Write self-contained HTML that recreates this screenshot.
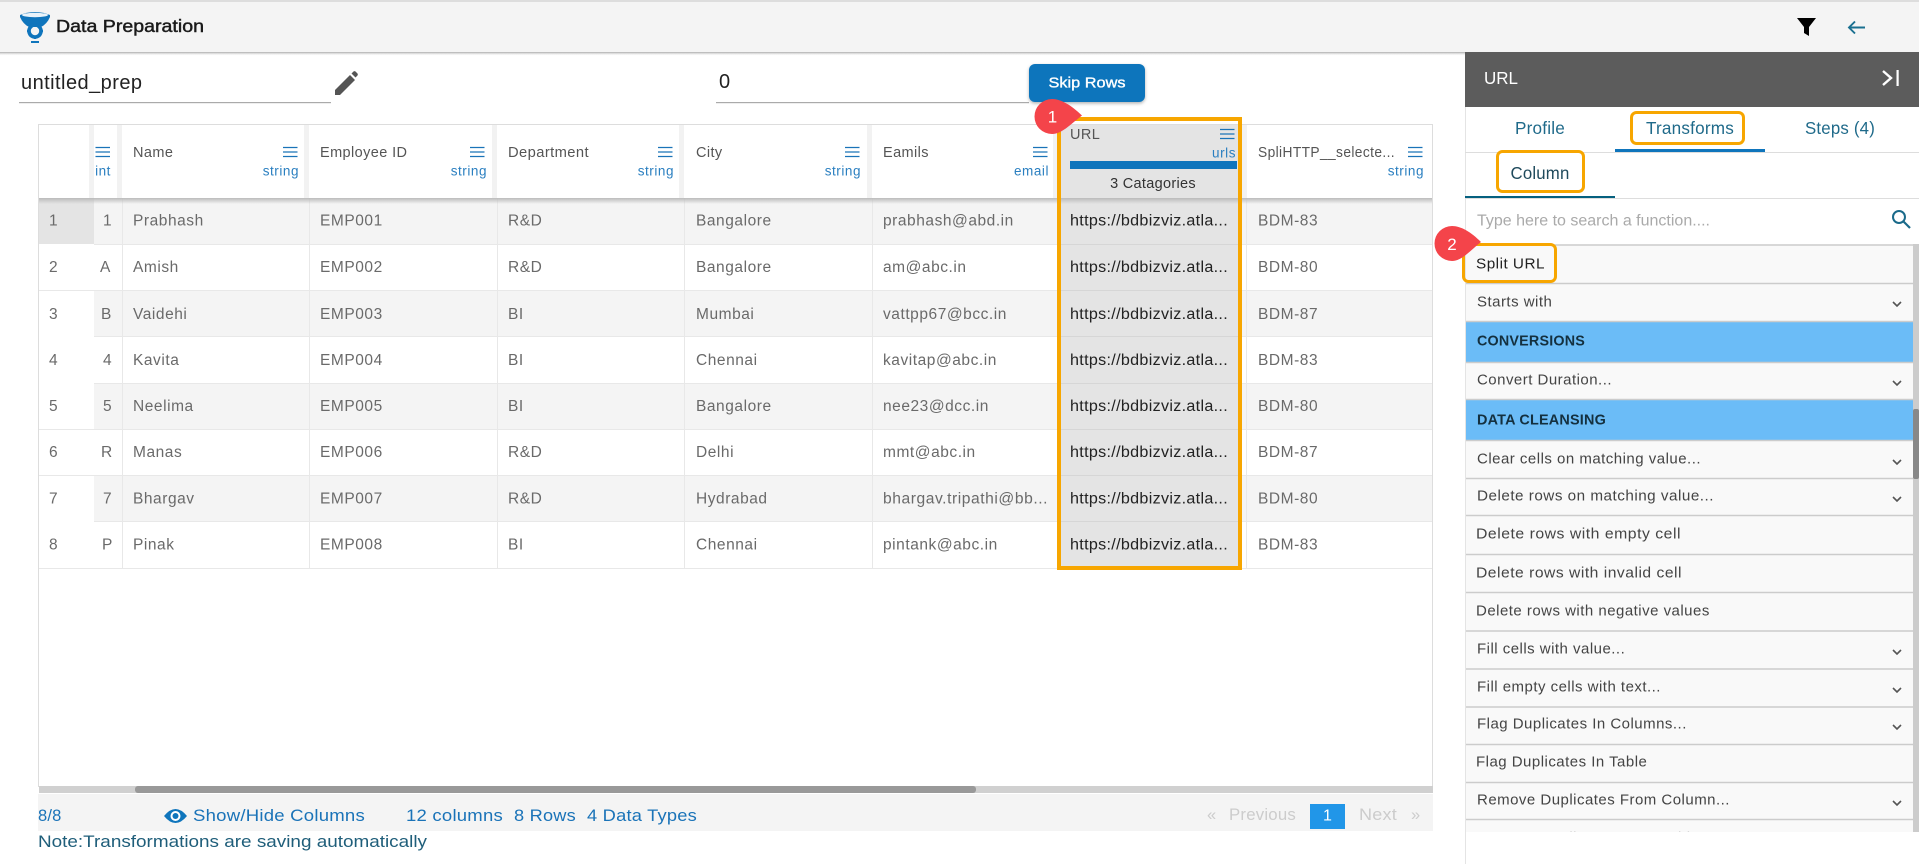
<!DOCTYPE html>
<html><head><meta charset="utf-8"><title>Data Preparation</title>
<style>
html,body{margin:0;padding:0;background:#fff;width:1919px;height:864px;overflow:hidden}
svg{display:block}
text{font-family:"Liberation Sans",sans-serif;dominant-baseline:central}
.c{font-size:15.5px;letter-spacing:.55px;fill:#6a6a6a;transform:translateY(1px)}
.u{font-size:15.5px;letter-spacing:.3px;fill:#222;transform:translateY(1px)}
.h{font-size:14.5px;letter-spacing:.4px;fill:#555;transform:translateY(1px)}
.t{font-size:13.5px;letter-spacing:.55px;fill:#2a7fc0;text-anchor:end;transform:translateY(1px)}
.i{font-size:15px;letter-spacing:.48px;fill:#444}
.b{font-size:15px;font-weight:bold;letter-spacing:.2px;fill:#14303f}
.f{font-size:16.5px;letter-spacing:.2px;fill:#1a73b8}
.p{font-size:16.5px;letter-spacing:.2px;fill:#ccc}
.tab{font-size:17.5px;letter-spacing:.2px;fill:#1f6a8a;text-anchor:middle}
.m{stroke:#1a73b8;stroke-width:1.3;fill:none}
.ch{stroke:#555;stroke-width:1.6;fill:none}
.l{stroke:#ccc;stroke-width:1.5}
.rl{stroke:#e8e8e8;stroke-width:1}
.o{fill:none;stroke:#f7a600}
</style></head><body>
<svg width="1919" height="864" viewBox="0 0 1919 864" xmlns="http://www.w3.org/2000/svg">
<defs>
<linearGradient id="sh" x1="0" y1="0" x2="0" y2="1"><stop offset="0" stop-color="#aaa"/><stop offset="1" stop-color="#fff" stop-opacity="0"/></linearGradient>
<linearGradient id="sh2" x1="0" y1="0" x2="0" y2="1"><stop offset="0" stop-color="#bbb"/><stop offset="1" stop-color="#bbb" stop-opacity="0"/></linearGradient>
<filter id="bs" x="-10%" y="-10%" width="120%" height="130%"><feDropShadow dx="0" dy="1.5" stdDeviation="1.5" flood-color="#000" flood-opacity=".3"/></filter>
</defs>

<!-- top bar -->
<rect width="1919" height="52" fill="#f4f4f4"/>
<rect width="1919" height="2" fill="#ddd"/>
<rect y="52" width="1919" height="4" fill="url(#sh)"/>
<!-- logo -->
<path d="M20 15 Q35 9 50 15 L50 17 Q47 24 41 27 L29 27 Q23 24 20 17Z" fill="#0f75bc"/>
<ellipse cx="35" cy="15" rx="13" ry="2.2" fill="#e9f3fa"/>
<circle cx="35" cy="31" r="6" fill="none" stroke="#0f75bc" stroke-width="3.6"/>
<path d="M35 23v3M35 36v3M27 31h3M40 31h3M29.5 25.5l2 2M38.5 34.5l2 2M40.5 25.5l-2 2M31.5 34.5l-2 2" stroke="#0f75bc" stroke-width="2.2"/>
<path d="M31 42h8" stroke="#0f75bc" stroke-width="2"/>
<text x="56" y="26" font-size="17.5" stroke="#1a1a1a" stroke-width=".45" textLength="148" lengthAdjust="spacingAndGlyphs" fill="#1a1a1a">Data Preparation</text>
<!-- top right icons -->
<path d="M1797 18H1816L1809 27V36L1804 33V27Z" fill="#000"/>
<path d="M1865 27.5H1849M1855 21.5L1849 27.5L1855 33.5" stroke="#1a7090" stroke-width="1.9" fill="none"/>

<!-- inputs -->
<text x="21" y="83" font-size="20" letter-spacing=".45" fill="#222">untitled_prep</text>
<rect x="19" y="102" width="312" height="1.2" fill="#aaa"/>
<path d="M335 95V90L350 75L355 80L340 95Z" fill="#555"/>
<path d="M351.5 73.5L353.5 71.5Q354.5 70.8 355.5 71.5L357.5 73.5Q358.2 74.5 357.5 75.5L355.5 77.5Z" fill="#555"/>
<text x="719" y="82" font-size="20" fill="#222">0</text>
<rect x="716" y="102" width="313" height="1.2" fill="#aaa"/>
<rect x="1029" y="64" width="116" height="38" rx="6" fill="#0f75bc" filter="url(#bs)"/>
<text x="1087" y="83" font-size="15" fill="#fff" stroke="#fff" stroke-width=".35" text-anchor="middle" textLength="77" lengthAdjust="spacingAndGlyphs">Skip Rows</text>

<!-- table frame -->
<rect x="38.5" y="124.5" width="1394" height="662" fill="#fff" stroke="#ddd"/>
<!-- header gutters -->
<rect x="89" y="125" width="5" height="73" fill="#f2f2f2"/>
<rect x="117" y="125" width="5" height="73" fill="#f2f2f2"/>
<rect x="304" y="125" width="5" height="73" fill="#f2f2f2"/>
<rect x="492" y="125" width="5" height="73" fill="#f2f2f2"/>
<rect x="679" y="125" width="5" height="73" fill="#f2f2f2"/>
<rect x="867" y="125" width="5" height="73" fill="#f2f2f2"/>
<rect x="1053" y="125" width="5" height="73" fill="#f2f2f2"/>
<rect x="1242" y="125" width="5" height="73" fill="#f2f2f2"/>

<!-- rows -->
<rect x="39" y="198" width="55" height="46" fill="#e4e4e4"/>
<rect x="94" y="198" width="1338" height="47" fill="#f4f4f4"/>
<rect x="94" y="291" width="1338" height="46" fill="#f4f4f4"/>
<rect x="94" y="383" width="1338" height="46" fill="#f4f4f4"/>
<rect x="94" y="476" width="1338" height="46" fill="#f4f4f4"/>
<rect x="1058" y="125" width="184" height="443" fill="#e4e4e4"/>
<path class="rl" d="M94 244.5H1432M39 290.5H1432M94 336.5H1432M94 383.5H1432M39 429.5H1432M39 475.5H1432M94 521.5H1432M39 568.5H1432"/>
<path d="M1058 244.5H1242M1058 290.5H1242M1058 336.5H1242M1058 383.5H1242M1058 429.5H1242M1058 475.5H1242M1058 521.5H1242" stroke="#d6d6d6"/>
<path class="rl" d="M122.5 198V568M309.5 198V568M497.5 198V568M684.5 198V568M872.5 198V568M1246.5 198V568"/>
<rect x="39" y="198" width="1393" height="6" fill="url(#sh2)"/>

<!-- header text -->
<g class="m">
<path d="M95.5 147.5h14.5M95.5 152h14.5M95.5 156.5h14.5"/>
<path d="M283 147.5h14.5M283 152h14.5M283 156.5h14.5"/>
<path d="M470 147.5h14.5M470 152h14.5M470 156.5h14.5"/>
<path d="M658 147.5h14.5M658 152h14.5M658 156.5h14.5"/>
<path d="M845 147.5h14.5M845 152h14.5M845 156.5h14.5"/>
<path d="M1033 147.5h14.5M1033 152h14.5M1033 156.5h14.5"/>
<path d="M1220 129.5h14.5M1220 134h14.5M1220 138.5h14.5"/>
<path d="M1408 147.5h14.5M1408 152h14.5M1408 156.5h14.5"/>
</g>
<text class="t" x="111" y="170">int</text>
<text class="h" x="133" y="152">Name</text><text class="t" x="299" y="170">string</text>
<text class="h" x="320" y="152">Employee ID</text><text class="t" x="487" y="170">string</text>
<text class="h" x="508" y="152" textLength="81" lengthAdjust="spacingAndGlyphs">Department</text><text class="t" x="674" y="170">string</text>
<text class="h" x="696" y="152">City</text><text class="t" x="861" y="170">string</text>
<text class="h" x="883" y="152">Eamils</text><text class="t" x="1049" y="170">email</text>
<text class="h" x="1070" y="134">URL</text><text class="t" x="1236" y="152">urls</text>
<rect x="1070" y="161" width="167" height="8" fill="#0f75bc"/>
<text x="1153" y="184" font-size="14.5" letter-spacing=".3" fill="#333" text-anchor="middle">3 Catagories</text>
<text class="h" x="1258" y="152" textLength="137" lengthAdjust="spacingAndGlyphs">SpliHTTP__selecte...</text><text class="t" x="1424" y="170">string</text>

<!-- cells -->
<g>
<text class="c" x="49" y="220">1</text><text class="c" x="103" y="220">1</text><text class="c" x="133" y="220">Prabhash</text><text class="c" x="320" y="220">EMP001</text><text class="c" x="508" y="220">R&amp;D</text><text class="c" x="696" y="220">Bangalore</text><text class="c" x="883" y="220">prabhash@abd.in</text><text class="c" x="1258" y="220">BDM-83</text>
<text class="c" x="49" y="266.5">2</text><text class="c" x="100" y="266.5">A</text><text class="c" x="133" y="266.5">Amish</text><text class="c" x="320" y="266.5">EMP002</text><text class="c" x="508" y="266.5">R&amp;D</text><text class="c" x="696" y="266.5">Bangalore</text><text class="c" x="883" y="266.5">am@abc.in</text><text class="c" x="1258" y="266.5">BDM-80</text>
<text class="c" x="49" y="313.5">3</text><text class="c" x="101" y="313.5">B</text><text class="c" x="133" y="313.5">Vaidehi</text><text class="c" x="320" y="313.5">EMP003</text><text class="c" x="508" y="313.5">BI</text><text class="c" x="696" y="313.5">Mumbai</text><text class="c" x="883" y="313.5">vattpp67@bcc.in</text><text class="c" x="1258" y="313.5">BDM-87</text>
<text class="c" x="49" y="359.5">4</text><text class="c" x="103" y="359.5">4</text><text class="c" x="133" y="359.5">Kavita</text><text class="c" x="320" y="359.5">EMP004</text><text class="c" x="508" y="359.5">BI</text><text class="c" x="696" y="359.5">Chennai</text><text class="c" x="883" y="359.5">kavitap@abc.in</text><text class="c" x="1258" y="359.5">BDM-83</text>
<text class="c" x="49" y="405.5">5</text><text class="c" x="103" y="405.5">5</text><text class="c" x="133" y="405.5">Neelima</text><text class="c" x="320" y="405.5">EMP005</text><text class="c" x="508" y="405.5">BI</text><text class="c" x="696" y="405.5">Bangalore</text><text class="c" x="883" y="405.5">nee23@dcc.in</text><text class="c" x="1258" y="405.5">BDM-80</text>
<text class="c" x="49" y="451.5">6</text><text class="c" x="101" y="451.5">R</text><text class="c" x="133" y="451.5">Manas</text><text class="c" x="320" y="451.5">EMP006</text><text class="c" x="508" y="451.5">R&amp;D</text><text class="c" x="696" y="451.5">Delhi</text><text class="c" x="883" y="451.5">mmt@abc.in</text><text class="c" x="1258" y="451.5">BDM-87</text>
<text class="c" x="49" y="498">7</text><text class="c" x="103" y="498">7</text><text class="c" x="133" y="498">Bhargav</text><text class="c" x="320" y="498">EMP007</text><text class="c" x="508" y="498">R&amp;D</text><text class="c" x="696" y="498">Hydrabad</text><text class="c" x="883" y="498" textLength="165" lengthAdjust="spacingAndGlyphs">bhargav.tripathi@bb...</text><text class="c" x="1258" y="498">BDM-80</text>
<text class="c" x="49" y="544">8</text><text class="c" x="102" y="544">P</text><text class="c" x="133" y="544">Pinak</text><text class="c" x="320" y="544">EMP008</text><text class="c" x="508" y="544">BI</text><text class="c" x="696" y="544">Chennai</text><text class="c" x="883" y="544">pintank@abc.in</text><text class="c" x="1258" y="544">BDM-83</text>
</g>
<g>
<text class="u" x="1070" y="220" textLength="158" lengthAdjust="spacingAndGlyphs">https://bdbizviz.atla...</text>
<text class="u" x="1070" y="266.5" textLength="158" lengthAdjust="spacingAndGlyphs">https://bdbizviz.atla...</text>
<text class="u" x="1070" y="313.5" textLength="158" lengthAdjust="spacingAndGlyphs">https://bdbizviz.atla...</text>
<text class="u" x="1070" y="359.5" textLength="158" lengthAdjust="spacingAndGlyphs">https://bdbizviz.atla...</text>
<text class="u" x="1070" y="405.5" textLength="158" lengthAdjust="spacingAndGlyphs">https://bdbizviz.atla...</text>
<text class="u" x="1070" y="451.5" textLength="158" lengthAdjust="spacingAndGlyphs">https://bdbizviz.atla...</text>
<text class="u" x="1070" y="498" textLength="158" lengthAdjust="spacingAndGlyphs">https://bdbizviz.atla...</text>
<text class="u" x="1070" y="544" textLength="158" lengthAdjust="spacingAndGlyphs">https://bdbizviz.atla...</text>
</g>
<!-- URL highlight -->
<rect x="1059" y="119" width="181" height="449" class="o" stroke-width="4"/>
<path d="M1052 99C1061 99 1071 105 1082 115.5C1072 123 1062 134 1052 134A17.5 17.5 0 0 1 1052 99Z" fill="#f4444a"/>
<text x="1052.5" y="117" font-size="17" fill="#fff" text-anchor="middle">1</text>

<!-- scrollbar + footer -->
<rect x="39" y="786" width="1394" height="7" fill="#d0d0d0"/>
<rect x="135" y="786" width="841" height="7" rx="3" fill="#999"/>
<rect x="38" y="794" width="1395" height="37" fill="#f4f4f4"/>
<text class="f" x="38" y="816">8/8</text>
<path d="M164 816Q175.500 802 187 816Q175.500 830 164 816Z" fill="#0f75bc"/>
<circle cx="175.500" cy="816" r="5" fill="#fff"/><circle cx="175.500" cy="816" r="3" fill="#0f75bc"/>
<text class="f" x="193" y="816" textLength="172" lengthAdjust="spacingAndGlyphs">Show/Hide Columns</text>
<text class="f" x="406" y="816" textLength="97" lengthAdjust="spacingAndGlyphs">12 columns</text>
<text class="f" x="514" y="816" textLength="62" lengthAdjust="spacingAndGlyphs">8 Rows</text>
<text class="f" x="587" y="816" textLength="110" lengthAdjust="spacingAndGlyphs">4 Data Types</text>
<text class="p" x="1207" y="815">«</text>
<text class="p" x="1229" y="815" textLength="67" lengthAdjust="spacingAndGlyphs">Previous</text>
<rect x="1310" y="804" width="35" height="25" fill="#2196e8"/>
<text x="1327.500" y="816" font-size="16" fill="#fff" text-anchor="middle">1</text>
<text class="p" x="1359" y="815" textLength="38" lengthAdjust="spacingAndGlyphs">Next</text>
<text class="p" x="1411" y="815">»</text>
<text x="38" y="842" font-size="16.500" fill="#1f5e7a" textLength="389" lengthAdjust="spacingAndGlyphs">Note:Transformations are saving automatically</text>

<!-- right panel -->
<rect x="1465" y="52" width="454" height="55" fill="#5c5c5c"/>
<rect x="1465" y="107" width="1" height="757" fill="#e4e4e4"/>
<text x="1484" y="78" font-size="17.500" fill="#fff" textLength="34" lengthAdjust="spacingAndGlyphs">URL</text>
<path d="M1883 71L1891 78L1883 85" stroke="#fff" stroke-width="2.400" fill="none"/>
<rect x="1896.500" y="70" width="2.200" height="16" fill="#fff"/>
<text class="tab" x="1540" y="128" textLength="50" lengthAdjust="spacingAndGlyphs">Profile</text>
<text class="tab" x="1690" y="128" textLength="88" lengthAdjust="spacingAndGlyphs">Transforms</text>
<text class="tab" x="1840" y="128" textLength="70" lengthAdjust="spacingAndGlyphs">Steps (4)</text>
<rect x="1615" y="149" width="150" height="3" fill="#0f75bc"/>
<rect x="1465" y="152" width="454" height="1" fill="#ddd"/>
<rect x="1631.500" y="112.500" width="112" height="31" rx="5" class="o" stroke-width="3"/>
<text class="tab" x="1540" y="173" style="fill:#1f4a5c" textLength="59" lengthAdjust="spacingAndGlyphs">Column</text>
<rect x="1497.500" y="151.500" width="86" height="40" rx="5" class="o" stroke-width="3"/>
<rect x="1465" y="196" width="150" height="2" fill="#05607f"/>
<rect x="1465" y="198" width="454" height="1" fill="#ddd"/>
<text x="1477" y="221" font-size="15.500" fill="#aaa" textLength="233" lengthAdjust="spacingAndGlyphs">Type here to search a function....</text>
<circle cx="1899" cy="217" r="6" fill="none" stroke="#1a6a8a" stroke-width="2"/>
<path d="M1903.500 221.500L1910 228" stroke="#1a6a8a" stroke-width="2.200"/>

<!-- list -->
<rect x="1466" y="245" width="447" height="587" fill="#f9f9f9"/>
<rect x="1466" y="322" width="447" height="40" fill="#6bbcf7"/>
<rect x="1466" y="400" width="447" height="40" fill="#6bbcf7"/>
<path class="l" d="M1466 245H1913M1466 283.500H1913M1466 321.500H1913M1466 362.500H1913M1466 399.500H1913M1466 440.500H1913M1466 478.500H1913M1466 515.500H1913M1466 554.500H1913M1466 592.500H1913M1466 631H1913M1466 669H1913M1466 707H1913M1466 744.500H1913M1466 782.500H1913M1466 819.500H1913"/>
<g class="i">
<text class="i" x="1476" y="264" style="fill:#222" textLength="69" lengthAdjust="spacingAndGlyphs">Split URL</text>
<text class="i" x="1477" y="302">Starts with</text>
<text class="i" x="1477" y="380" textLength="135" lengthAdjust="spacingAndGlyphs">Convert Duration...</text>
<text class="i" x="1477" y="459" textLength="224" lengthAdjust="spacingAndGlyphs">Clear cells on matching value...</text>
<text class="i" x="1477" y="496" textLength="237" lengthAdjust="spacingAndGlyphs">Delete rows on matching value...</text>
<text class="i" x="1476" y="534" textLength="205" lengthAdjust="spacingAndGlyphs">Delete rows with empty cell</text>
<text class="i" x="1476" y="573" textLength="206" lengthAdjust="spacingAndGlyphs">Delete rows with invalid cell</text>
<text class="i" x="1476" y="611">Delete rows with negative values</text>
<text class="i" x="1477" y="649">Fill cells with value...</text>
<text class="i" x="1477" y="687">Fill empty cells with text...</text>
<text class="i" x="1477" y="724">Flag Duplicates In Columns...</text>
<text class="i" x="1476" y="762">Flag Duplicates In Table</text>
<text class="i" x="1477" y="800">Remove Duplicates From Column...</text>
<text class="i" x="1477" y="838" style="fill:#bbb">Remove Duplicates From Table...</text>
</g>
<text class="b" x="1477" y="341" textLength="108" lengthAdjust="spacingAndGlyphs">CONVERSIONS</text>
<text class="b" x="1477" y="420" textLength="129" lengthAdjust="spacingAndGlyphs">DATA CLEANSING</text>
<g class="ch">
<path d="M1893 302l4 4 4-4M1893 381l4 4 4-4M1893 460l4 4 4-4M1893 497l4 4 4-4M1893 650l4 4 4-4M1893 688l4 4 4-4M1893 725l4 4 4-4M1893 801l4 4 4-4"/>
</g>
<rect x="1913" y="244" width="6" height="588" fill="#ccc"/>
<rect x="1913" y="409" width="6" height="70" rx="2" fill="#888"/>
<rect x="1461" y="832" width="458" height="32" fill="#fff"/>
<rect x="1465" y="832" width="1" height="32" fill="#e4e4e4"/>
<!-- split url highlight + badge -->
<rect x="1463.500" y="244.500" width="92" height="37" rx="5" class="o" stroke-width="3"/>
<path d="M1452 226C1461 226 1471 232 1481 242C1472 249 1462 261 1452 261A17.500 17.500 0 0 1 1452 226Z" fill="#f4444a"/>
<text x="1452" y="244.500" font-size="17" fill="#fff" text-anchor="middle">2</text>
</svg>
</body></html>
